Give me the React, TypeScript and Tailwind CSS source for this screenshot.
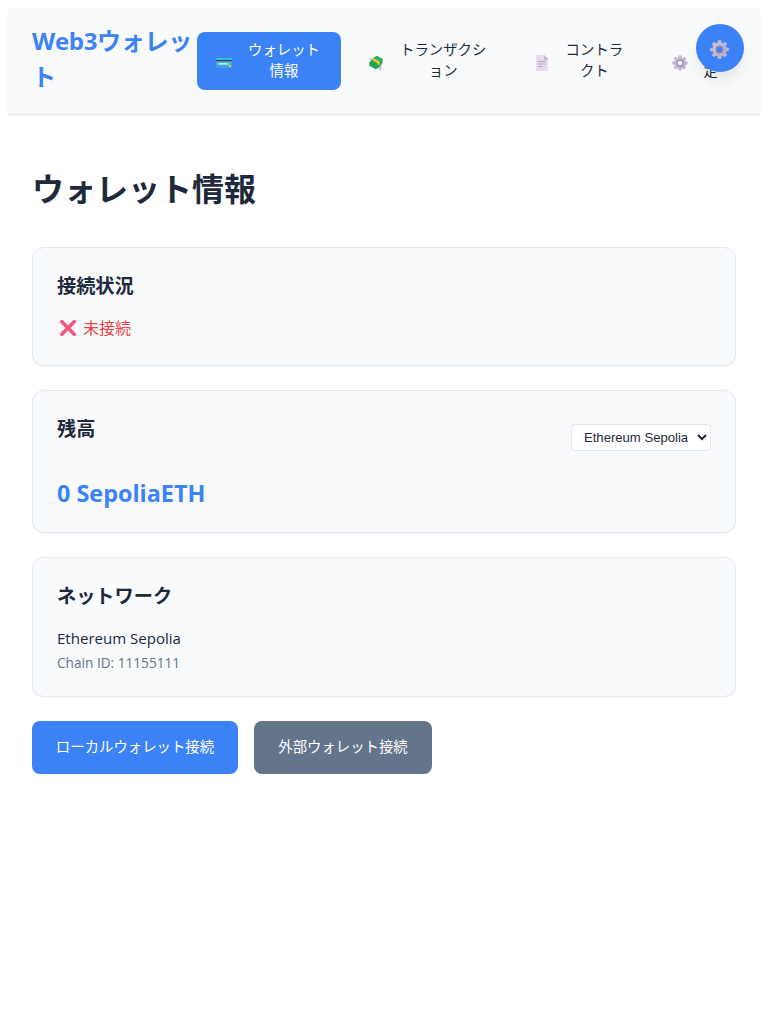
import React from "react";

function CardIcon() {
  return (
    <svg width="16" height="10" viewBox="0 0 16 10" className="block">
      <defs>
        <linearGradient id="cardFill" x1="0" y1="0" x2="0" y2="1">
          <stop offset="0" stopColor="#35c3d5" />
          <stop offset="1" stopColor="#3aa0e0" />
        </linearGradient>
      </defs>
      <rect width="16" height="10" rx="0.8" fill="url(#cardFill)" />
      <rect y="2" width="16" height="1.2" fill="#40384a" />
      <rect x="2" y="5" width="11" height="2" fill="#a5cce4" />
      <rect x="3" y="5" width="8" height="1" fill="#d5dfea" />
      <rect x="13" y="7" width="2" height="2" fill="#f2c73b" />
    </svg>
  );
}

function MoneyIcon() {
  return (
    <svg width="16" height="16" viewBox="0 0 16 16" className="block">
      <path d="M0.5 4 5 2.6 4.2 6 2.4 5.6Z M0.8 6.2 4 7 3.4 9.4 1.8 8.8Z" fill="#d6d3da" />
      <path d="M10 12 14 10 13 16 10.8 14.4Z M7.5 14 9.5 12.5 11.5 14.5Z" fill="#cbc8cf" />
      <path d="M8.6 .8 14.6 3.8Q15.8 7.5 11.8 11.5L7.5 14.2 1.3 10.8Q.4 7.5 4.5 4Z" fill="#20a65b" />
      <path d="M8.8 1.5 13.9 4.4 10.3 8.4 5.2 5.2Z" fill="#2bb466" />
      <path d="M5.6 3.2 11.8 6.8 11.8 9.8 10.2 10 9.7 8.5 4.2 5Z" fill="#fbc22b" />
    </svg>
  );
}

function PageIcon() {
  return (
    <svg width="12" height="16" viewBox="0 0 12 16" className="block">
      <path d="M0 0H8L12 4V16H0Z" fill="#e6dced" />
      <path d="M8 0 12 4V5H8Z" fill="#c4b7cc" />
      <path d="M2 6.5H10M2 9H10M2 11.5H7" stroke="#b4a9bd" strokeWidth="1" />
    </svg>
  );
}

function GearIcon({ size, hole, id }: { size: number; hole: string; id: string }) {
  const angles = [0, 45, 90, 135, 180, 225, 270, 315];
  return (
    <svg width={size} height={size} viewBox="0 0 20 20" className="block">
      <defs>
        <linearGradient id={id} x1="0" y1="0" x2="1" y2="1">
          <stop offset="0" stopColor="#cfc2dc" />
          <stop offset="1" stopColor="#b9abc8" />
        </linearGradient>
      </defs>
      {angles.map((a) => (
        <path key={a} d="M7.6 5 8.1 1Q8.2.3 9 .3H11Q11.8.3 11.9 1L12.4 5Z" fill={`url(#${id})`} transform={`rotate(${a} 10 10)`} />
      ))}
      <circle cx="10" cy="10" r="7.3" fill={`url(#${id})`} />
      <circle cx="10" cy="10" r="3.6" fill={hole} stroke="#978da3" strokeWidth="1.3" />
    </svg>
  );
}

function CrossIcon() {
  return (
    <svg width="16" height="16" viewBox="0 0 16 16" className="block">
      <path d="M1.8 1.8 14.2 14.2M14.2 1.8 1.8 14.2" stroke="#f8557f" strokeWidth="3.6" strokeLinecap="round" />
    </svg>
  );
}

function NavItem({ icon, lines, className }: { icon: React.ReactNode; lines: string[]; className: string }) {
  return (
    <button className={`flex h-[58px] shrink-0 items-center rounded-lg text-[14.4px] leading-[21px] ${className}`}>
      <span className="flex w-[18px] shrink-0 justify-center pt-[3px]">{icon}</span>
      <span className="ml-[15px] shrink-0 pb-[2px] text-center">
        {lines.map((l) => (
          <span key={l} className="block whitespace-nowrap">{l}</span>
        ))}
      </span>
    </button>
  );
}

function Card({ className, children }: { className: string; children: React.ReactNode }) {
  return (
    <section className={`rounded-xl border border-[#e2e8f0] bg-[#f8fafc] px-6 shadow-[0_1px_2px_rgba(0,0,0,0.05)] ${className}`}>
      {children}
    </section>
  );
}

const heading = "text-[19.2px] font-bold leading-[29px]";

export default function App() {
  return (
    <div className="min-h-[1024px] bg-white p-2 font-['Open_Sans','Noto_Sans_CJK_JP',sans-serif] text-[#1e293b]">
      <header className="flex h-[107px] items-start border-b border-[#e2e8f0] bg-[#f8fafc] pl-6 shadow-[0_1px_2px_rgba(0,0,0,0.05)]">
        <h1 className="w-[165px] shrink-0 pt-[15px] text-2xl font-bold leading-[36px] text-[#3b82f6]">
          <span className="block whitespace-nowrap tracking-[-0.3px]">Web3ウォレッ</span>
          <span className="block">ト</span>
        </h1>
        <nav className="flex gap-2 pt-6">
          <NavItem icon={<CardIcon />} lines={["ウォレット", "情報"]} className="w-[144px] bg-[#3b82f6] pl-[18px] text-white" />
          <NavItem icon={<MoneyIcon />} lines={["トランザクシ", "ョン"]} className="w-[158px] pl-[18px]" />
          <NavItem icon={<PageIcon />} lines={["コントラ", "クト"]} className="w-[130px] pl-[17.5px]" />
          <NavItem icon={<GearIcon size={16} hole="#f8fafc" id="gearNav" />} lines={["設", "定"]} className="w-[83px] pl-[17.5px]" />
        </nav>
      </header>
      <button className="fixed right-6 top-6 flex size-12 items-center justify-center rounded-full bg-[#3b82f6] pr-px pt-[3px] shadow-[0_10px_15px_-3px_rgba(0,0,0,0.1)]">
        <GearIcon size={19} hole="#3b82f6" id="gearFab" />
      </button>

      <main className="px-6 pt-[50px]">
        <h2 className="h-[82px] text-[32px] font-bold leading-[48px]">ウォレット情報</h2>
        <div className="flex flex-col gap-6">
          <Card className="h-[119px] pt-[23px]">
            <h3 className={heading}>接続状況</h3>
            <div className="mt-[16px] flex items-center pl-[3px] text-base leading-6 text-[#ef4444]">
              <CrossIcon />
              <span className="ml-[7px]">未接続</span>
            </div>
          </Card>
          <Card className="h-[143px] pt-[23px]">
            <div className="flex h-[57px] items-start justify-between">
              <h3 className={heading}>残高</h3>
              <select className="mt-[10px] h-[27px] w-[140px] rounded border border-[#e2e8f0] bg-white pl-2 pr-1 font-['Liberation_Sans',Arial,sans-serif] text-[13.1px]">
                <option>Ethereum Sepolia</option>
              </select>
            </div>
            <p className="mt-[4px] text-[23.4px] font-bold leading-[36px] text-[#3b82f6]">0 SepoliaETH</p>
          </Card>
          <Card className="h-[140px] pt-[23px]">
            <h3 className={heading}>ネットワーク</h3>
            <p className="mt-[16px] text-[15.05px] leading-6">Ethereum Sepolia</p>
            <p className="mt-[2px] text-[13.65px] leading-[22px] text-[#64748b]">Chain ID: 11155111</p>
          </Card>
          <div className="flex gap-4 text-[14.4px] text-white">
            <button className="h-[53px] w-[206px] rounded-lg bg-[#3b82f6] pb-[2px]">ローカルウォレット接続</button>
            <button className="h-[53px] w-[178px] rounded-lg bg-[#64748b] pb-[2px]">外部ウォレット接続</button>
          </div>
        </div>
      </main>
    </div>
  );
}
